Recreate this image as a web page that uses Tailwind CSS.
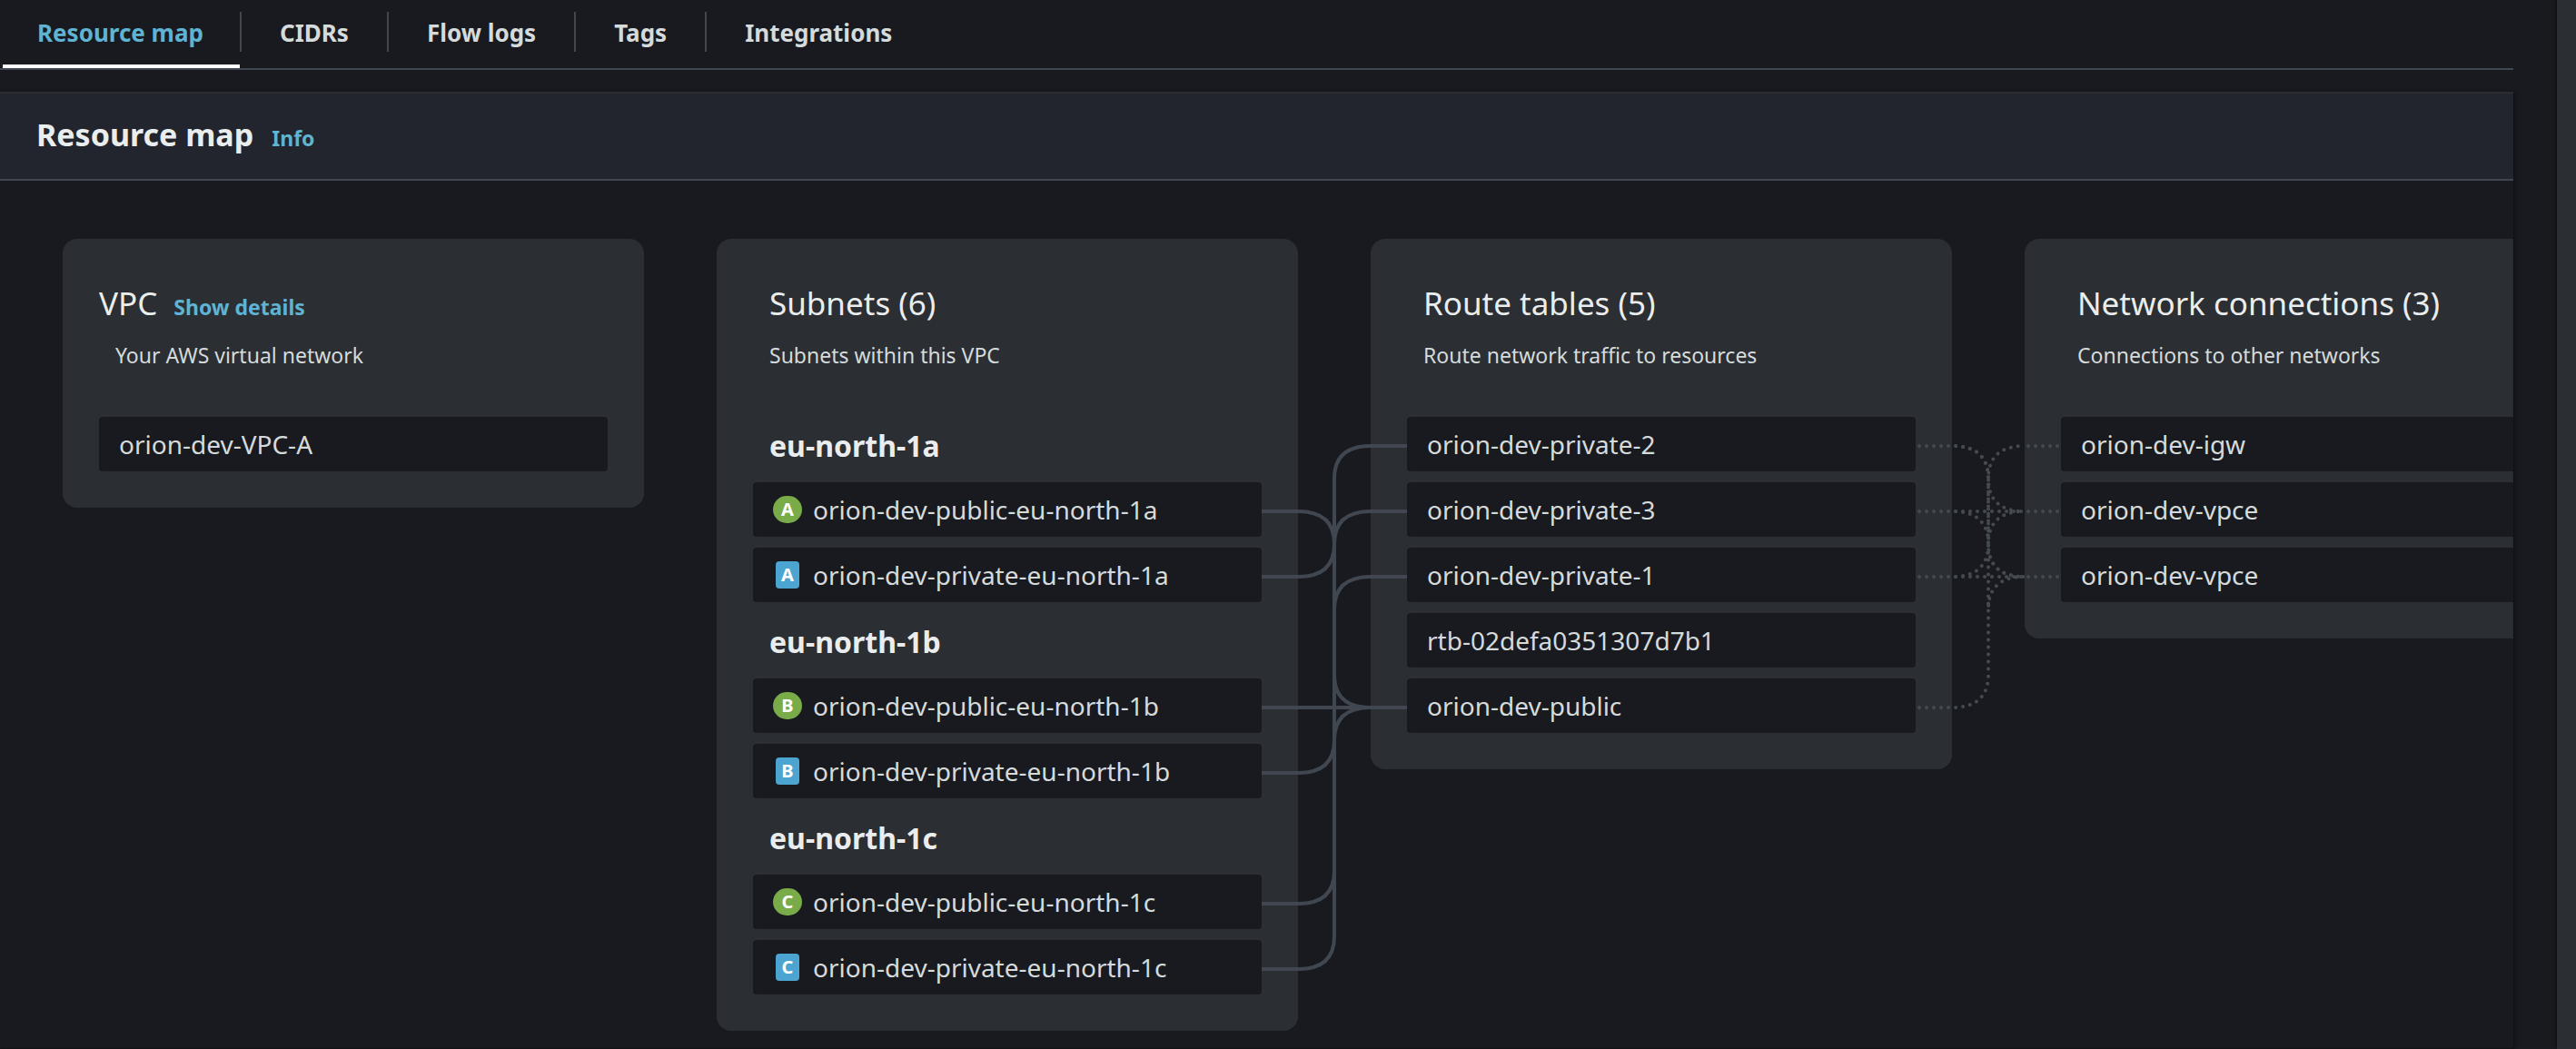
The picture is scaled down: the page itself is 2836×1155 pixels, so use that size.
<!DOCTYPE html>
<html lang="en">
<head>
<meta charset="utf-8">
<title>VPC resource map</title>
<script src="https://cdn.jsdelivr.net/npm/@tailwindcss/browser@4"></script>
</head>
<body class="flex min-h-screen overflow-x-hidden bg-[#191a1f] font-['Noto_Sans',sans-serif] text-[#d5dbdb]">
<main class="mr-12 min-w-0 flex-1">

  <nav role="tablist" aria-label="VPC details" class="flex h-[77px] border-b-2 border-[#414750] pl-[3px] text-[26px] leading-[46px] font-bold">
    <button role="tab" aria-selected="true" class="flex items-start border-b-4 border-white pt-[13px] pr-10 pl-[38px] text-[#5fb3d3]">Resource map</button>
    <button role="tab" aria-selected="false" class="flex items-start pt-[13px]"><span class="h-11 border-x-2 border-[#414750] px-[42px]">CIDRs</span></button>
    <button role="tab" aria-selected="false" class="flex items-start pt-[13px]"><span class="h-11 border-r-2 border-[#414750] px-[42px]">Flow logs</span></button>
    <button role="tab" aria-selected="false" class="flex items-start pt-[13px]"><span class="h-11 border-r-2 border-[#414750] px-[42px]">Tags</span></button>
    <button role="tab" aria-selected="false" class="flex items-start pt-[13px]"><span class="h-11 px-[42px]">Integrations</span></button>
  </nav>

  <section class="mt-6 overflow-hidden shadow-[1px_1px_3px_#0c0d10]">
    <header class="flex items-baseline gap-5 border-t-2 border-b-2 border-t-[#2a2d31] border-b-[#414750] bg-[#22252d] pt-[21px] pb-[25px] pl-10">
      <h2 class="text-[34px] leading-[48px] font-bold text-[#eaeded]">Resource map</h2>
      <a href="#info" class="text-[23px] leading-8 font-bold text-[#5fb3d3]">Info</a>
    </header>

    <div class="flex items-start gap-20 pt-16 pb-[19px] pl-[69px]">

      <article class="w-160 shrink-0 rounded-2xl bg-[#2b2e33] px-10 pt-12 pb-10">
        <div class="flex items-baseline gap-[18px]">
          <h3 class="text-[35px] leading-[46px] text-[#eaeded]">VPC</h3>
          <a href="#details" class="text-[23px] leading-8 font-bold text-[#5fb3d3]">Show details</a>
        </div>
        <p class="mt-[18px] mb-13 pl-[18px] text-[23px] leading-8">Your AWS virtual network</p>
        <ul class="text-[28px] leading-10">
          <li class="flex h-15 items-center rounded bg-[#191a1f] px-[22px]">orion-dev-VPC-A</li>
        </ul>
      </article>

      <article class="relative w-160 shrink-0 rounded-2xl bg-[#2b2e33] px-10 pt-12 pb-10">
        <h3 class="pl-[18px] text-[35px] leading-[46px] text-[#eaeded]">Subnets (6)</h3>
        <p class="mt-[18px] mb-13 pl-[18px] text-[23px] leading-8">Subnets within this VPC</p>
        <div class="flex flex-col gap-3">
          <h4 class="flex h-15 items-center pt-1 pl-[18px] text-[32px] leading-10 font-bold text-[#eaeded]">eu-north-1a</h4>
          <ul class="flex flex-col gap-3 text-[28px] leading-10">
            <li class="flex h-15 items-center gap-3 rounded bg-[#191a1f] px-[22px]">
              <span class="flex w-8 justify-center"><span class="flex h-[30px] w-8 items-center justify-center rounded-full bg-[#7aab49] text-xl leading-none font-bold text-white">A</span></span>orion-dev-public-eu-north-1a
            </li>
            <li class="flex h-15 items-center gap-3 rounded bg-[#191a1f] px-[22px]">
              <span class="flex w-8 justify-center"><span class="flex h-[30px] w-[26px] items-center justify-center rounded bg-[#4ba5d0] text-xl leading-none font-bold text-white">A</span></span>orion-dev-private-eu-north-1a
            </li>
          </ul>
          <h4 class="flex h-15 items-center pt-1 pl-[18px] text-[32px] leading-10 font-bold text-[#eaeded]">eu-north-1b</h4>
          <ul class="flex flex-col gap-3 text-[28px] leading-10">
            <li class="flex h-15 items-center gap-3 rounded bg-[#191a1f] px-[22px]">
              <span class="flex w-8 justify-center"><span class="flex h-[30px] w-8 items-center justify-center rounded-full bg-[#7aab49] text-xl leading-none font-bold text-white">B</span></span>orion-dev-public-eu-north-1b
            </li>
            <li class="flex h-15 items-center gap-3 rounded bg-[#191a1f] px-[22px]">
              <span class="flex w-8 justify-center"><span class="flex h-[30px] w-[26px] items-center justify-center rounded bg-[#4ba5d0] text-xl leading-none font-bold text-white">B</span></span>orion-dev-private-eu-north-1b
            </li>
          </ul>
          <h4 class="flex h-15 items-center pt-1 pl-[18px] text-[32px] leading-10 font-bold text-[#eaeded]">eu-north-1c</h4>
          <ul class="flex flex-col gap-3 text-[28px] leading-10">
            <li class="flex h-15 items-center gap-3 rounded bg-[#191a1f] px-[22px]">
              <span class="flex w-8 justify-center"><span class="flex h-[30px] w-8 items-center justify-center rounded-full bg-[#7aab49] text-xl leading-none font-bold text-white">C</span></span>orion-dev-public-eu-north-1c
            </li>
            <li class="flex h-15 items-center gap-3 rounded bg-[#191a1f] px-[22px]">
              <span class="flex w-8 justify-center"><span class="flex h-[30px] w-[26px] items-center justify-center rounded bg-[#4ba5d0] text-xl leading-none font-bold text-white">C</span></span>orion-dev-private-eu-north-1c
            </li>
          </ul>
        </div>
        <!-- subnet to route table associations; rows are 72 apart, the first centred at 228 -->
        <svg aria-hidden="true" class="pointer-events-none absolute top-0 left-[600px] z-10 h-[872px] w-40" viewBox="0 0 160 872" fill="none" stroke="#414750" stroke-width="4">
          <path d="M0 300H40Q80 300 80 336V480Q80 516 120 516H160"/>
          <path d="M0 372H40Q80 372 80 336V264Q80 228 120 228H160"/>
          <path d="M0 516H160"/>
          <path d="M0 588H40Q80 588 80 552V408Q80 372 120 372H160"/>
          <path d="M0 732H40Q80 732 80 696V552Q80 516 120 516H160"/>
          <path d="M0 804H40Q80 804 80 768V336Q80 300 120 300H160"/>
        </svg>
      </article>

      <article class="relative w-160 shrink-0 rounded-2xl bg-[#2b2e33] px-10 pt-12 pb-10">
        <h3 class="pl-[18px] text-[35px] leading-[46px] text-[#eaeded]">Route tables (5)</h3>
        <p class="mt-[18px] mb-13 pl-[18px] text-[23px] leading-8">Route network traffic to resources</p>
        <ul class="flex flex-col gap-3 text-[28px] leading-10">
          <li class="flex h-15 items-center rounded bg-[#191a1f] px-[22px]">orion-dev-private-2</li>
          <li class="flex h-15 items-center rounded bg-[#191a1f] px-[22px]">orion-dev-private-3</li>
          <li class="flex h-15 items-center rounded bg-[#191a1f] px-[22px]">orion-dev-private-1</li>
          <li class="flex h-15 items-center rounded bg-[#191a1f] px-[22px]">rtb-02defa0351307d7b1</li>
          <li class="flex h-15 items-center rounded bg-[#191a1f] px-[22px]">orion-dev-public</li>
        </ul>
        <!-- route table to network connection routes -->
        <svg aria-hidden="true" class="pointer-events-none absolute top-0 left-[600px] z-10 h-[584px] w-40" viewBox="0 0 160 584" fill="none" stroke="#454a51" stroke-width="4" stroke-linecap="round" stroke-dasharray="0 8" stroke-dashoffset="-4">
          <path d="M0 228H40M0 300H40M0 372H40M0 516H40"/>
          <path d="M120 228H160M120 300H160M120 372H160"/>
          <path d="M40 228Q80 228 80 264Q80 300 120 300"/>
          <path d="M40 228Q80 228 80 264V336Q80 372 120 372"/>
          <path d="M40 300H120"/>
          <path d="M40 300Q80 300 80 336Q80 372 120 372"/>
          <path d="M40 372Q80 372 80 336Q80 300 120 300"/>
          <path d="M40 372H120"/>
          <path d="M40 516Q80 516 80 480V264Q80 228 120 228"/>
          <path d="M80 408Q80 372 120 372"/>
        </svg>
      </article>

      <article class="w-160 shrink-0 rounded-2xl bg-[#2b2e33] px-10 pt-12 pb-10">
        <h3 class="pl-[18px] text-[35px] leading-[46px] text-[#eaeded]">Network connections (3)</h3>
        <p class="mt-[18px] mb-13 pl-[18px] text-[23px] leading-8">Connections to other networks</p>
        <ul class="flex flex-col gap-3 text-[28px] leading-10">
          <li class="flex h-15 items-center rounded bg-[#191a1f] px-[22px]">orion-dev-igw</li>
          <li class="flex h-15 items-center rounded bg-[#191a1f] px-[22px]">orion-dev-vpce</li>
          <li class="flex h-15 items-center rounded bg-[#191a1f] px-[22px]">orion-dev-vpce</li>
        </ul>
      </article>

    </div>
  </section>
</main>
<aside aria-label="Tools" class="w-[21px] shrink-0 bg-[#2b2e33] shadow-[-1px_0_3px_#0c0d10]"></aside>
</body>
</html>
